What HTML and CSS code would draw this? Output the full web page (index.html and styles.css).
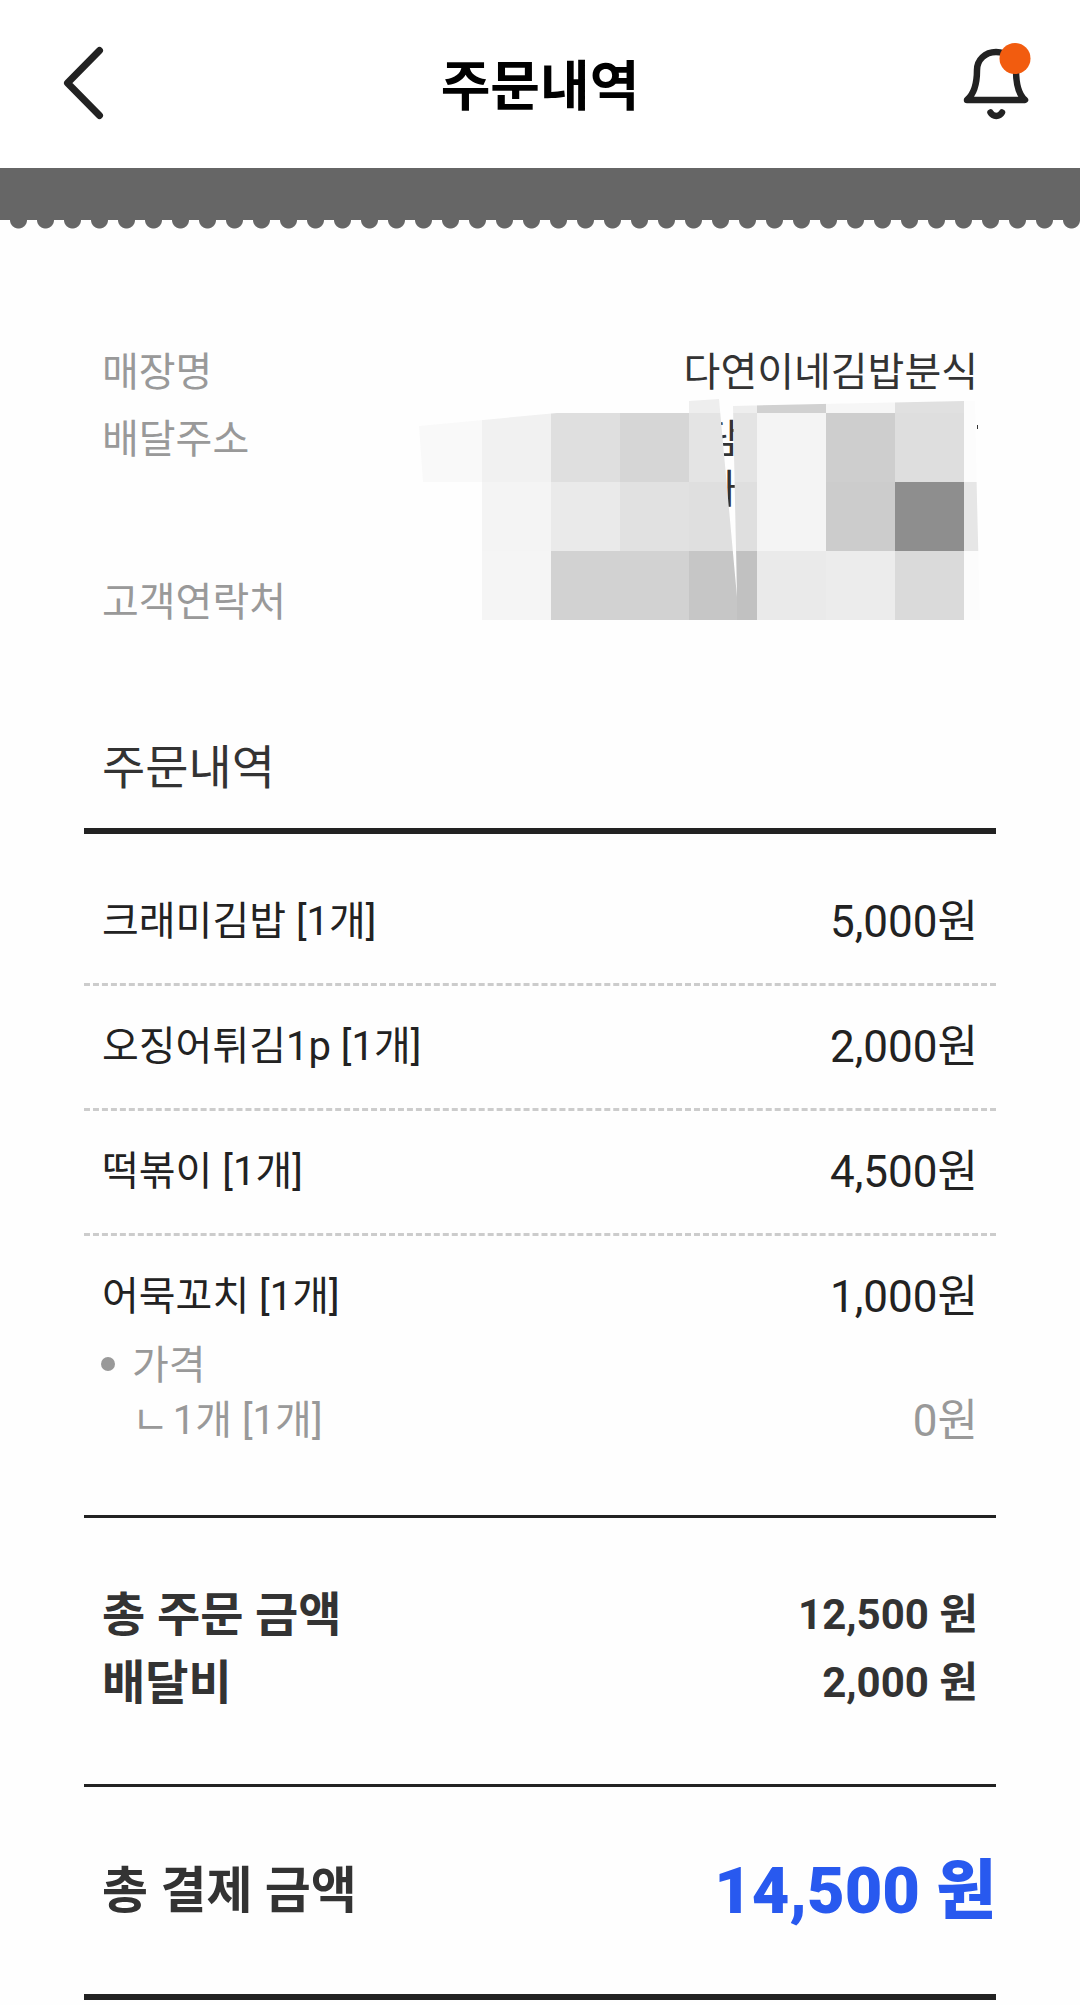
FILE: index.html
```html
<!doctype html>
<html lang="ko">
<head>
  <meta charset="UTF-8">
  <meta name="viewport" content="width=device-width, initial-scale=1.0">
  <title>주문내역</title>
  <link rel="stylesheet" href="styles.css">
</head>
<body>
  <header class="header">
    <button class="icon-btn" type="button" aria-label="뒤로">
      <svg width="84" height="84" viewBox="48 42 84 84" fill="none">
        <path d="M99.5 50.5L67.500 83L99.5 115.5" stroke="#222" stroke-width="7" stroke-linecap="round" stroke-linejoin="round"/>
      </svg>
    </button>
    <h1 class="title">주문내역</h1>
    <button class="icon-btn" type="button" aria-label="알림">
      <svg width="84" height="84" viewBox="948 42 84 84" fill="none">
        <path d="M967 100C974 94 977 82 977 70C977 60 985 52 996 52C1007 52 1016 60 1016 70C1016 82 1018 94 1025 100Z" stroke="#222" stroke-width="6.5" stroke-linejoin="round"/>
        <path d="M990.5 112.5C993 117 999.5 117 1002 112.5" stroke="#222" stroke-width="6.5" stroke-linecap="round"/>
        <circle cx="1015" cy="58.5" r="15.5" fill="#f25c0f"/>
      </svg>
    </button>
  </header>
  <div class="strip"></div>

  <main class="receipt">
    <dl class="info">
      <div class="info-row">
        <dt>매장명</dt>
        <dd>다연이네김밥분식</dd>
      </div>
      <div class="info-row info-address">
        <dt>배달주소</dt>
        <dd class="masked">
          <!-- address and phone number are hidden behind a mosaic -->
          <svg class="mosaic" width="562" height="222" viewBox="418 399 562 222" role="img" aria-label="가려진 정보">
            <defs>
              <clipPath id="mask">
                <path d="M419 426L557 413H689V401L719 399L737 597L733 406L964 401H975L977 500L980 620H482V482H423Z"/>
              </clipPath>
            </defs>
            <text class="mosaic-text" x="703" y="453">담</text>
            <text class="mosaic-text" x="701" y="503">가</text>
            <path d="M977 425h1v4h-1z" fill="#333"/>
            <g clip-path="url(#mask)" shape-rendering="crispEdges">
              <path d="M689 399h68v14h-68z" fill="#eee"/>
              <path d="M757 399h69v14h-69z" fill="#d1d1d1"/>
              <path d="M826 399h69v14h-69z" fill="#f6f6f6"/>
              <path d="M895 399h69v14h-69z" fill="#e0e0e0"/>
              <path d="M964 399h16v83h-16z" fill="#fcfcfc"/>

              <path d="M418 413h64v69h-64z" fill="#f9f9f9"/>
              <path d="M482 413h69v69h-69z" fill="#f1f1f1"/>
              <path d="M551 413h69v69h-69z" fill="#dfdfdf"/>
              <path d="M620 413h69v69h-69z" fill="#d6d6d6"/>
              <path d="M689 413h68v69h-68z" fill="#e4e4e4"/>
              <path d="M757 413h69v69h-69z" fill="#f4f4f4"/>
              <path d="M826 413h69v69h-69z" fill="#cecece"/>
              <path d="M895 413h69v69h-69z" fill="#dedede"/>

              <path d="M482 482h69v69h-69z" fill="#f4f4f4"/>
              <path d="M551 482h69v69h-69z" fill="#eaeaea"/>
              <path d="M620 482h69v69h-69z" fill="#e1e1e1"/>
              <path d="M689 482h68v69h-68z" fill="#dfdfdf"/>
              <path d="M757 482h69v69h-69z" fill="#f4f4f4"/>
              <path d="M826 482h69v69h-69z" fill="#ccc"/>
              <path d="M895 482h69v69h-69z" fill="#8e8e8e"/>
              <path d="M964 482h16v69h-16z" fill="#e6e6e6"/>

              <path d="M482 551h69v69h-69z" fill="#f5f5f5"/>
              <path d="M551 551h138v69h-138z" fill="#d2d2d2"/>
              <path d="M689 551h48v69h-48z" fill="#c6c6c6"/>
              <path d="M737 551h20v69h-20z" fill="#c1c1c1"/>
              <path d="M757 551h69v69h-69z" fill="#eaeaea"/>
              <path d="M826 551h69v69h-69z" fill="#ececec"/>
              <path d="M895 551h69v69h-69z" fill="#dadada"/>
              <path d="M964 551h16v69h-16z" fill="#fcfcfc"/>
            </g>
          </svg>
        </dd>
      </div>
      <div class="info-row">
        <dt>고객연락처</dt>
        <dd></dd>
      </div>
    </dl>

    <h2 class="section-title">주문내역</h2>

    <ul class="items">
      <li class="item">
        <div class="row">
          <span>크래미김밥 [1개]</span>
          <span class="price">5,000원</span>
        </div>
      </li>
      <li class="item">
        <div class="row">
          <span>오징어튀김1p [1개]</span>
          <span class="price">2,000원</span>
        </div>
      </li>
      <li class="item">
        <div class="row">
          <span>떡볶이 [1개]</span>
          <span class="price">4,500원</span>
        </div>
      </li>
      <li class="item">
        <div class="row">
          <span>어묵꼬치 [1개]</span>
          <span class="price">1,000원</span>
        </div>
        <div class="options">
          <div class="option-name">가격</div>
          <div class="row">
            <span><span class="option-mark">ㄴ</span>1개 [1개]</span>
            <span class="price">0원</span>
          </div>
        </div>
      </li>
    </ul>

    <div class="totals">
      <div class="row">
        <span>총 주문 금액</span>
        <span class="amount">12,500 원</span>
      </div>
      <div class="row">
        <span>배달비</span>
        <span class="amount">2,000 원</span>
      </div>
    </div>

    <div class="grand-total row">
      <span>총 결제 금액</span>
      <strong class="grand-amount">14,500 원</strong>
    </div>
  </main>
</body>
</html>
```

FILE: styles.css
```css
* {
    box-sizing: border-box;
}

body {
    margin: 0;
    background: #fefefe;
    color: #222;
    font-family: Roboto, "Noto Sans CJK KR", sans-serif;
    font-size: 40px;
    line-height: 48px;
}

h1, h2, ul, dl, dd {
    margin: 0;
    padding: 0;
}

.header {
    display: flex;
    align-items: center;
    justify-content: space-between;
    height: 168px;
    padding: 0 48px;
    background: #fff;
}

.icon-btn {
    display: flex;
    padding: 0;
    border: 0;
    background: none;
    cursor: pointer;
}

.title {
    padding-top: 8px;
    color: #000;
    font-size: 54px;
    font-weight: 700;
    line-height: 72px;
}

/* receipt edge: gray bar with a row of half circles under it */
.strip {
    height: 61px;
    background:
        linear-gradient(#666, #666) 0 0 / 100% 52px no-repeat,
        radial-gradient(circle at 50% 0, #666 8px, transparent 9px) 5px 52px / 27px 9px repeat-x;
}

.receipt {
    padding: 120px 84px 0;
}

.info {
    display: flex;
    flex-direction: column;
    gap: 19px;
    padding: 0 18px;
}

.info-row {
    display: flex;
    justify-content: space-between;
    color: #333;
}

.info-row dt {
    color: #999;
}

.info-address {
    min-height: 144px;
}

.masked {
    position: relative;
}

.mosaic {
    position: absolute;
    top: -17px;
    right: -2px;
}

.mosaic-text {
    fill: #333;
}

.section-title {
    margin-top: 113px;
    padding: 0 18px 32px;
    border-bottom: 6px solid #222;
    color: #333;
    font-size: 47px;
    font-weight: 400;
    line-height: 56px;
}

.row {
    display: flex;
    align-items: center;
    justify-content: space-between;
}

.items {
    padding-top: 27px;
    border-bottom: 3px solid #222;
    list-style: none;
}

.item {
    padding: 37px 18px;
    border-bottom: 3px dashed #ccc;
}

.item:last-child {
    padding-bottom: 70px;
    border-bottom: 0;
}

.price {
    font-size: 44px;
}

.options {
    padding: 21px 0 0 30px;
    color: #999;
}

.option-name {
    position: relative;
    margin-bottom: 7px;
}

.option-name::before {
    content: "";
    position: absolute;
    top: 15px;
    left: -31px;
    width: 14px;
    height: 14px;
    border-radius: 50%;
    background: #999;
}

.option-mark {
    margin-right: 4px;
}

.totals {
    display: flex;
    flex-direction: column;
    gap: 12px;
    padding: 69px 18px 73px;
    border-bottom: 3px solid #222;
    color: #333;
    font-size: 47px;
    font-weight: 700;
    line-height: 56px;
}

.amount {
    font-size: 42px;
}

.grand-total {
    padding: 68px 0 67px 18px;
    border-bottom: 6px solid #222;
    color: #333;
    font-size: 50px;
    font-weight: 700;
    line-height: 72px;
}

.grand-amount {
    color: #2859ef;
    font-size: 65px;
}
```
